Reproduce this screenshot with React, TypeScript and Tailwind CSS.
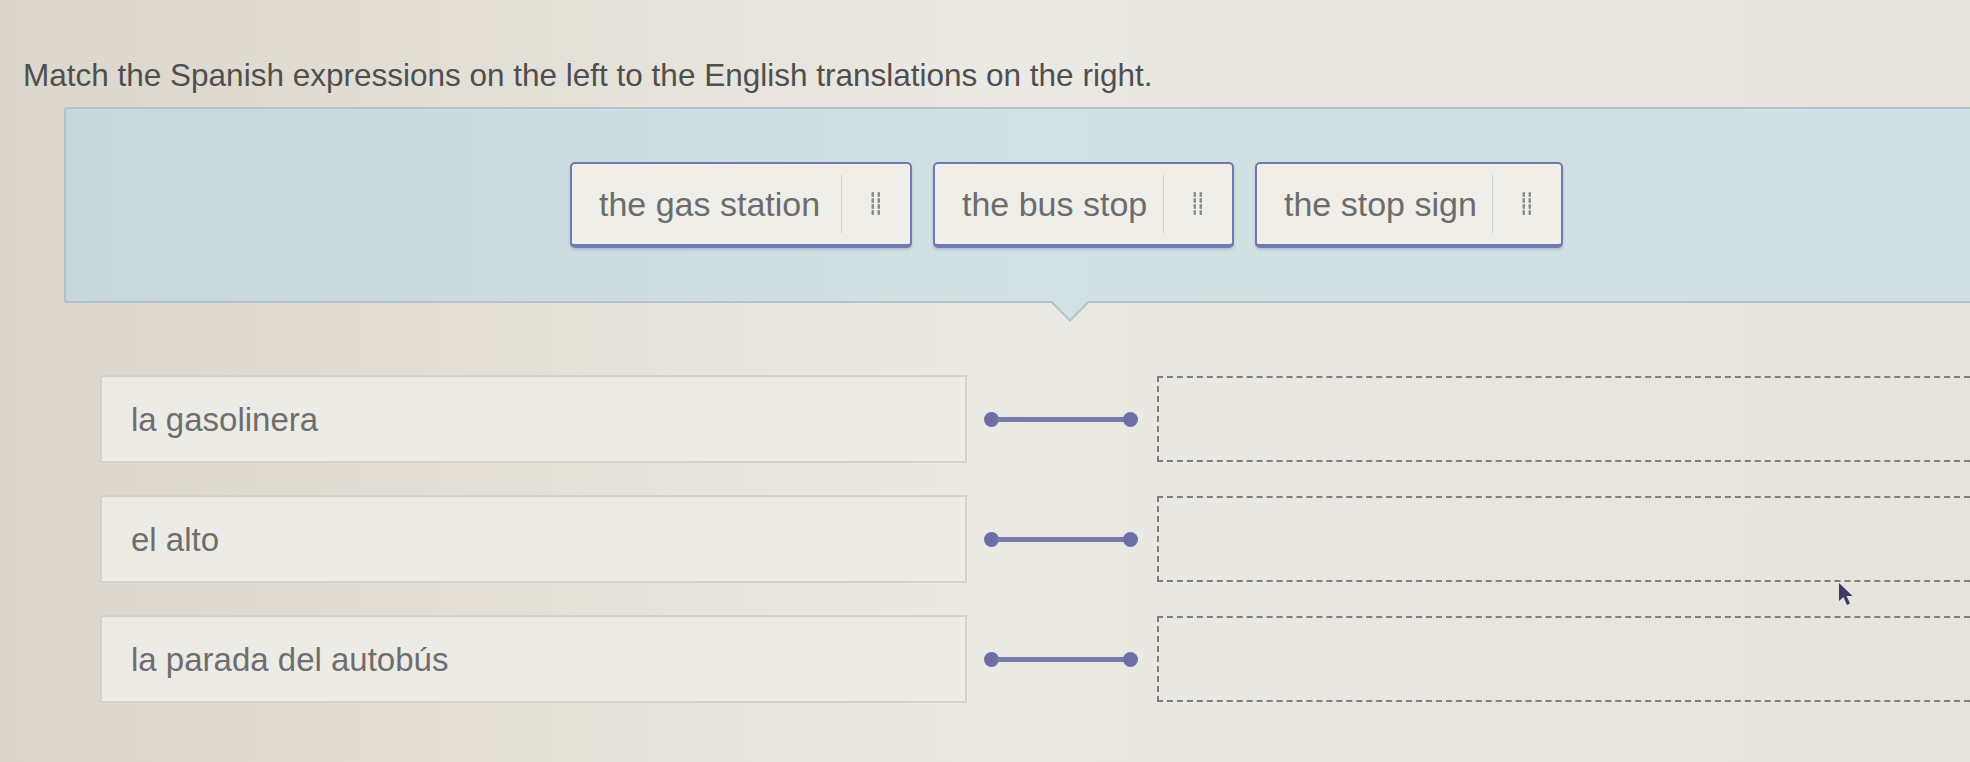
import { ReactNode } from "react";

const chips = [
  { label: "the gas station", width: "w-[342px]" },
  { label: "the bus stop", width: "w-[301px]" },
  { label: "the stop sign", width: "w-[308px]" },
];

const prompts = [
  { label: "la gasolinera" },
  { label: "el alto" },
  { label: "la parada del autobús" },
];

const GripIcon = () => (
  <svg width="12" height="26" viewBox="0 0 12 26" className="text-[#8b8b8b]">
    {[1, 7, 13, 19].map((y) => (
      <g key={y} fill="currentColor">
        <rect x="1.5" y={y} width="2.5" height="5" rx="1" />
        <rect x="7.5" y={y} width="2.5" height="5" rx="1" />
      </g>
    ))}
  </svg>
);

const AnswerChip = ({ label, width }: { label: string; width: string }) => (
  <div
    className={`${width} h-[86px] flex items-center rounded-[5px] border-2 border-b-[4px] border-[#7478b2] bg-[#efeee9] shadow-[0_2px_3px_rgba(90,95,150,0.25)]`}
  >
    <span className="flex-1 pl-[27px] text-[34px] leading-none text-[#6c6c6c]">{label}</span>
    <div className="w-px h-[58px] bg-[#cfcfcb]" />
    <div className="w-[68px] flex justify-center">
      <GripIcon />
    </div>
  </div>
);

const Connector = () => (
  <div className="w-[154px] flex items-center">
    <div className="w-[15px] h-[15px] rounded-full bg-[#6b6fa6]" />
    <div className="flex-1 -mx-[2px] h-[5px] bg-[#777aa9]" />
    <div className="w-[15px] h-[15px] rounded-full bg-[#6b6fa6]" />
  </div>
);

const MatchRow = ({ children }: { children: ReactNode }) => (
  <div className="flex items-center h-[88px]">
    <div className="ml-[100px] w-[867px] h-[88px] flex items-center border-2 border-[#d3d2cc] bg-[#ecebe5] pl-[29px]">
      <span className="text-[33px] leading-none text-[#6e6e6e]">{children}</span>
    </div>
    <div className="ml-[17px]">
      <Connector />
    </div>
    <div className="ml-[19px] flex-1 h-[86px] border-2 border-r-0 border-dashed border-[#7f7f7d]" />
  </div>
);

export default function App() {
  return (
    <div
      className="relative w-[1970px] h-[762px] overflow-hidden bg-gradient-to-r from-[#dcd6cb] via-[#ebe9e3] to-[#e5e3dc]"
      style={{ fontFamily: '"Liberation Sans", Arial, sans-serif' }}
    >
      <h1 className="pt-[57px] pl-[23px] text-[31.5px] leading-[36px] text-[#4f4f4f]">
        Match the Spanish expressions on the left to the English translations on the right.
      </h1>

      {/* answer bank */}
      <div className="relative mt-[14px] ml-[64px] h-[196px] flex items-center pl-[504px] gap-[21px] rounded-l-[3px] border-2 border-r-0 border-[#b0c3c8] bg-gradient-to-r from-[#c8d7da] via-[#d3e1e3] to-[#d1dfe2]">
        {chips.map((c) => (
          <AnswerChip key={c.label} label={c.label} width={c.width} />
        ))}
        <div className="absolute left-[990px] -bottom-[15px] w-[28px] h-[28px] rotate-45 border-r-2 border-b-2 border-[#b0c3c8] bg-[#d3e1e3]" />
      </div>

      <div className="mt-[72px] flex flex-col gap-[32px]">
        {prompts.map((p) => (
          <MatchRow key={p.label}>{p.label}</MatchRow>
        ))}
      </div>

      {/* mouse pointer */}
      <svg className="absolute left-[1838px] top-[582px]" width="16" height="24" viewBox="0 0 16 24">
        <path d="M1 1 L1 19 L5.5 15 L9 23 L12 21.5 L8.5 14 L14.5 14 Z" fill="#3d3866" />
      </svg>
    </div>
  );
}
